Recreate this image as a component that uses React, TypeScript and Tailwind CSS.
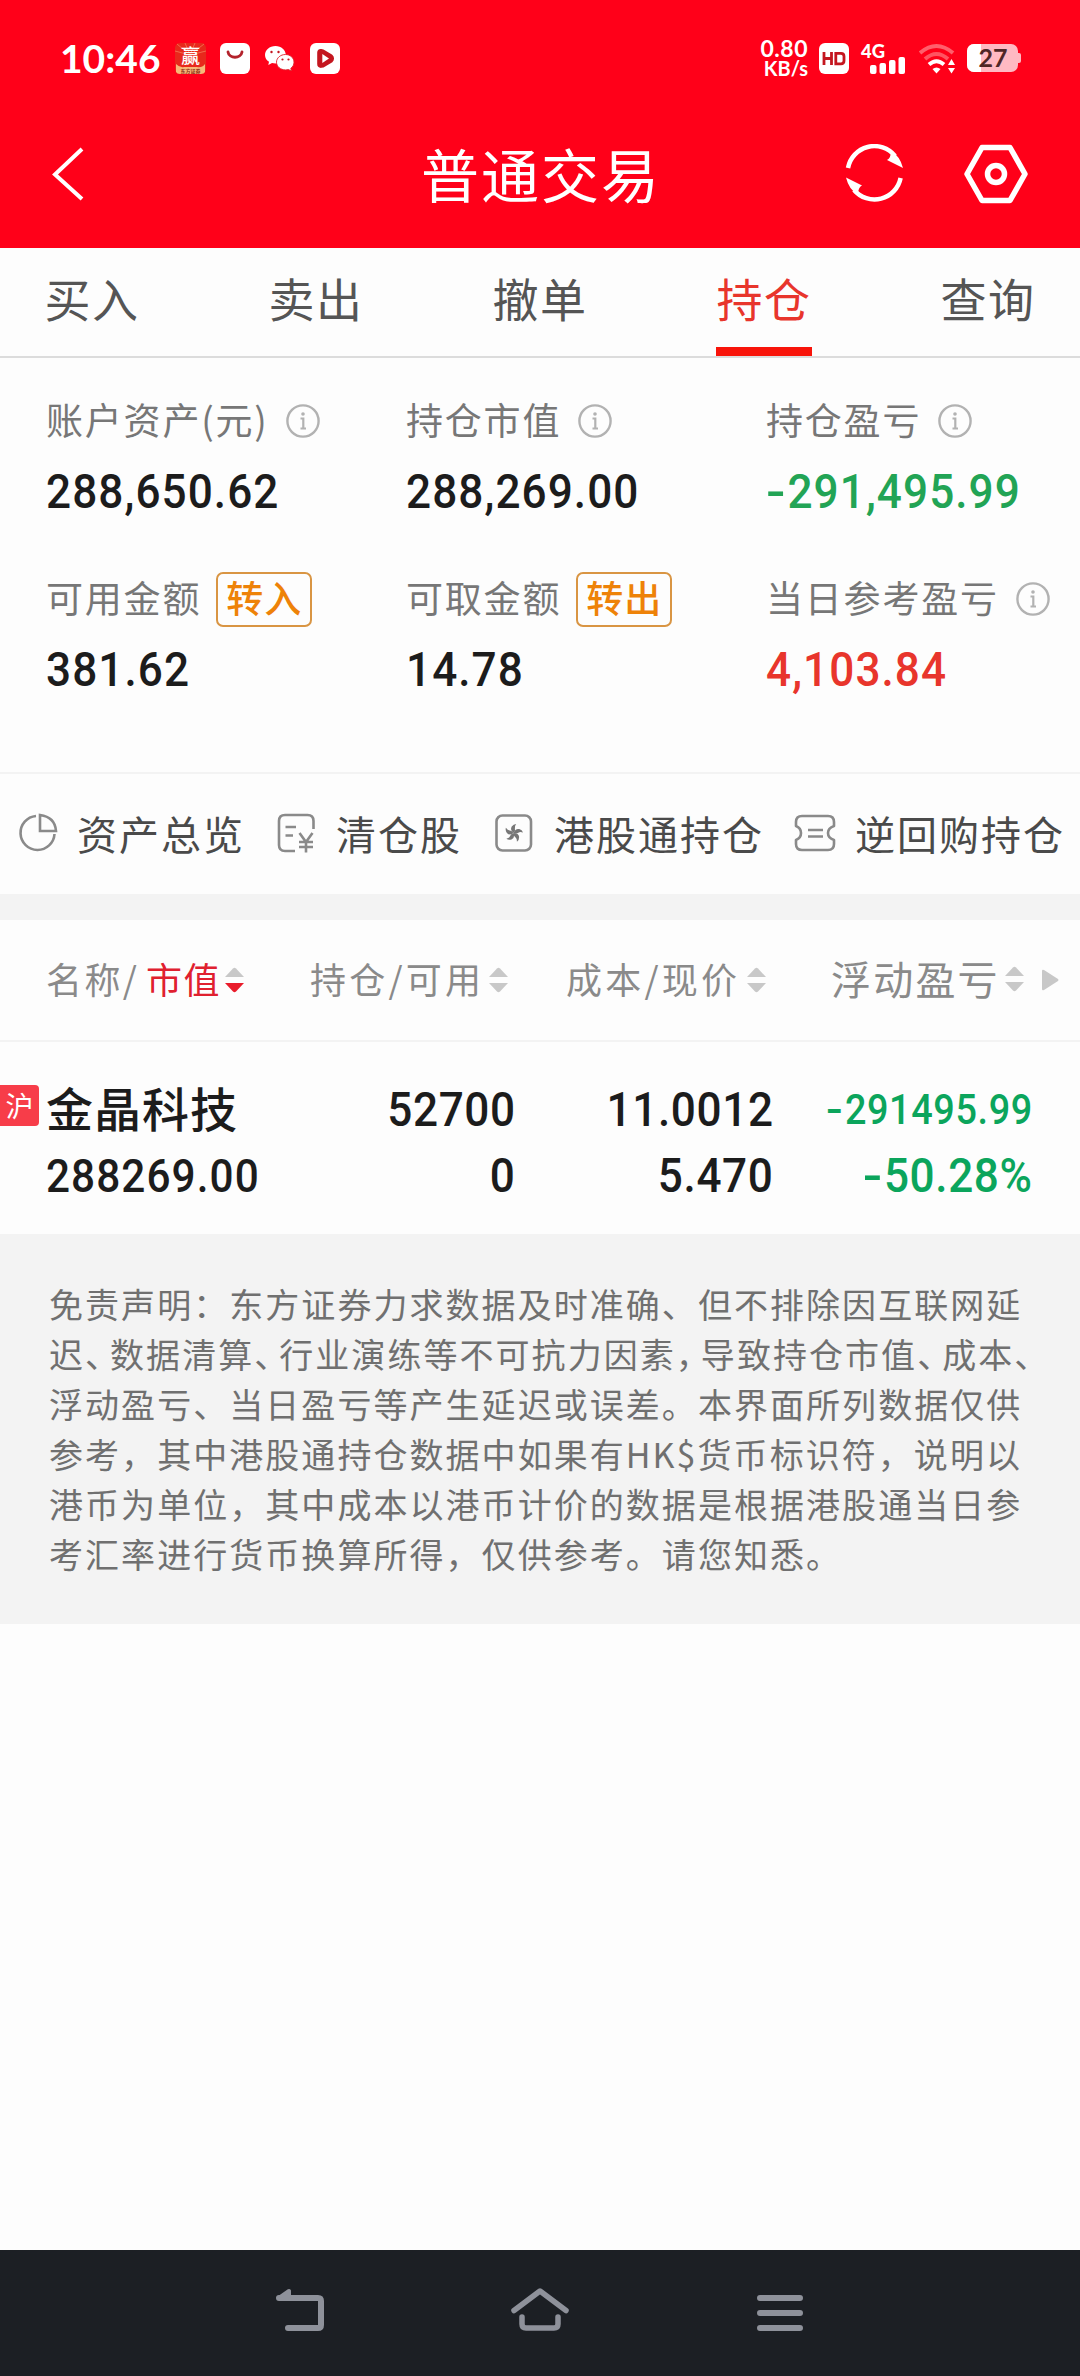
import type { ReactNode } from 'react';

const CJK = "font-['Noto_Sans_CJK_SC',sans-serif]";

const tabs = ['买入', '卖出', '撤单', '持仓', '查询'];

function StatusBar() {
  return (
    <div className="flex h-[116px] items-center pl-[60px] pr-[59px] text-white">
      <span className="w-[115px] font-['Lato'] text-[39px] leading-[50px] font-bold">10:46</span>
      <svg className="h-[31px] w-[31px] overflow-visible" viewBox="0 0 31 31">
        <rect width="31" height="31" rx="5" fill="#e8281c" />
        <path d="M15 12 2 1M15 12 10 0M15 12 20 0M15 12 29 1M15 12 0 8M15 12 31 8" stroke="#f26a4c" />
        <path d="M1 21q4 4 8 3h13q5 1 8-3v8q-1 2-4 2H5q-3 0-4-2z" fill="#f7b878" />
        <text x="15.500" y="20" textAnchor="middle" fontSize="19" fontWeight="500" fill="#fff" fontFamily="Noto Sans CJK SC">赢</text>
        <text x="15.500" y="29.500" textAnchor="middle" fontSize="5" fontWeight="700" fill="#8b2a12" fontFamily="Noto Sans CJK SC">东方证券</text>
      </svg>
      <svg className="ml-[14px] h-[31px] w-[30px]" viewBox="0 0 30 31">
        <rect width="30" height="31" rx="6" fill="#fff" />
        <path d="M8 9c1 7 13 7 14 0" fill="none" stroke="#b3222b" strokeWidth="2.800" strokeLinecap="round" />
      </svg>
      <svg className="ml-[15px] h-[26px] w-[30px]" viewBox="0 0 30 26">
        <path d="M10.500 1C4.500 1 0 5 0 10c0 3 1.500 5.200 4 6.800L3.300 20l3.700-2c1.200.3 2.400.5 3.500.5 5.500 0 10.300-3.500 10.300-8.500S16.300 1 10.500 1z" fill="#fff" />
        <path d="M20.500 9.500c-5 0-9 3.400-9 7.700s4 7.700 9 7.700c1 0 2-.1 2.900-.4l3 1.500-.6-2.700c2-1.400 3.200-3.600 3.200-6.100 0-4.300-3.800-7.700-8.500-7.700z" fill="#fff" stroke="#e0202a" strokeWidth="0.900" />
        <g fill="#c4161f">
          <circle cx="6.500" cy="7" r="1.200" />
          <circle cx="13.500" cy="7" r="1.200" />
          <circle cx="17.500" cy="14.500" r="1.100" />
          <circle cx="23.500" cy="14.500" r="1.100" />
        </g>
      </svg>
      <svg className="ml-[15px] h-[31px] w-[30px]" viewBox="0 0 30 31">
        <rect width="30" height="31" rx="6" fill="#fff" />
        <path d="M9 9.500q0-2 2-1.700l2 .5 8 4.700q2.500 2.500 0 5l-8 4.700-2 .4q-2 0-2-2z" fill="#c4161f" stroke="#c4161f" strokeWidth="3.600" strokeLinejoin="round" />
        <path d="M12.300 11v9l6.700-4.500z" fill="#fff" />
      </svg>

      <div className="ml-auto flex w-[52px] flex-col items-end font-['Lato'] font-bold">
        <span className="text-[23px] leading-[19px] tracking-[0.500px]">0.80</span>
        <span className="text-[20px] leading-[20px]">KB/s</span>
      </div>
      <svg className="ml-[11px] h-[31px] w-[30px]" viewBox="0 0 30 31">
        <rect width="30" height="31" rx="6" fill="#fff" />
        <path d="M5 9v13M12.500 9v13M5 15.500h7.500M16.800 10.300H22q3 0 3 3v4.500q0 3-3 3h-5.200z" fill="none" stroke="#c4161f" strokeWidth="2.800" />
      </svg>
      <svg className="ml-[12px] h-[31px] w-[45px] overflow-visible" viewBox="0 0 45 31">
        <text x="0" y="14.500" fontSize="19.500" fontWeight="900" fill="#fff" fontFamily="Lato" textLength="24" lengthAdjust="spacingAndGlyphs">4G</text>
        <g fill="#fff">
          <rect x="9" y="22" width="6.500" height="9" rx="2" />
          <rect x="18.500" y="20" width="6.500" height="11" rx="2" />
          <rect x="28" y="17" width="6.500" height="14" rx="2" />
          <rect x="37.500" y="14" width="6.500" height="17" rx="2" />
        </g>
      </svg>
      <svg className="ml-[13px] h-[31px] w-[37px]" viewBox="0 0 37 31">
        <g fill="none" strokeWidth="4">
          <path d="M1 10q16.500-14 33 0" stroke="#ff5f6c" />
          <path d="M6 16q11.500-10 23 0" stroke="#ff5361" />
          <path d="M10 21.500q7.500-6.500 15 0" stroke="#fff" />
        </g>
        <path d="M17.500 30.500 13.500 26q4-3 8 0z" fill="#fff" />
        <path d="M32.500 16l3.500 6h-7zM32.500 30.500l3.500-5.500h-7z" fill="#fff" />
      </svg>
      <svg className="ml-[11px] h-[28px] w-[54px] overflow-visible" viewBox="0 0 54 28">
        <clipPath id="battery">
          <rect width="51" height="28" rx="7" />
        </clipPath>
        <g clipPath="url(#battery)">
          <rect width="51" height="28" fill="#ffb9c2" />
          <rect width="14" height="28" fill="#fff" />
        </g>
        <path d="M51 9h1q2 0 2 2v6q0 2-2 2h-1z" fill="#ffb9c2" />
        <text x="26" y="23" textAnchor="middle" fontSize="25" fontWeight="700" fill="#4f2626" fontFamily="Lato">27</text>
      </svg>
    </div>
  );
}

function TitleBar() {
  return (
    <div className="flex h-[132px] items-center pr-[51px] pb-[16px] pl-[52px] text-white">
      <svg className="h-[54px] w-[32px]" viewBox="0 0 32 54" fill="none" stroke="#fff" strokeWidth="4">
        <path d="M30 2 3 27.500 30 52" />
      </svg>
      <h1 className={`${CJK} ml-[337px] w-[240px] pb-[2px] text-[58px] leading-none tracking-[2px] whitespace-nowrap`}>普通交易</h1>
      <svg className="ml-[184px] h-[60px] w-[60px]" viewBox="0 0 60 60">
        <g fill="none" stroke="#fff" strokeWidth="4.500">
          <path d="M3 24A26.700 26.700 0 0 1 50 12" />
          <path d="M55.600 34A26.700 26.700 0 0 1 9 46" />
        </g>
        <path d="M46 7q9 5 12 17l-16-8q4-2 4-9zM13 50.500Q4 46 1 33.500l16 8q-4 2-4 9z" fill="#fff" />
      </svg>
      <svg className="ml-[59px] h-[62px] w-[64px]" viewBox="0 0 64 62" fill="none" stroke="#fff" strokeWidth="5.500" strokeLinejoin="round">
        <path d="M18 4.500h28L61 31 46 57.500H18L3 31z" />
        <circle cx="32" cy="31" r="8.500" />
      </svg>
    </div>
  );
}

function Tabs() {
  return (
    <nav className={`${CJK} flex h-[110px] justify-between border-b-2 border-[#dcdcdc] px-[44px] text-[46px]`}>
      {tabs.map((tab) => (
        <div
          key={tab}
          className={
            tab === '持仓'
              ? 'w-[96px] border-b-[9px] border-[#f8140a] pt-[16px] text-center leading-[66px] tracking-[1.500px] whitespace-nowrap text-[#e8352c]'
              : 'w-[96px] pt-[16px] text-center leading-[66px] tracking-[1.500px] whitespace-nowrap text-[#555]'
          }
        >
          {tab}
        </div>
      ))}
    </nav>
  );
}

// Narrow figures; the leading minus gets a little more room than the digits
function Num({ value, right = false }: { value: string; right?: boolean }) {
  const negative = value.startsWith('-');
  return (
    <span
      className={
        right
          ? "inline-block origin-right scale-x-90 align-top font-['Roboto'] font-medium tracking-[0.700px] whitespace-nowrap"
          : "inline-block origin-left scale-x-90 align-top font-['Roboto'] font-medium tracking-[1.200px] whitespace-nowrap"
      }
    >
      {negative && <span className="mr-[6px] inline-block origin-left scale-x-130">-</span>}
      {negative ? value.slice(1) : value}
    </span>
  );
}

function Info() {
  return (
    <svg className="ml-[17px] h-[34px] w-[34px] shrink-0" viewBox="0 0 34 34">
      <circle cx="17" cy="17" r="15.600" fill="none" stroke="#b2b2b2" strokeWidth="2.400" />
      <circle cx="17" cy="10" r="1.800" fill="#b2b2b2" />
      <path d="M14.500 14.500H17.300V24M14.500 24.500h5.500" fill="none" stroke="#b2b2b2" strokeWidth="2.200" />
    </svg>
  );
}

function Stat({ label, value, color = 'text-[#1c1c1c]', children }: { label: string; value: string; color?: string; children?: ReactNode }) {
  return (
    <div className="h-[178px] w-[360px] shrink-0">
      <div className={`${CJK} flex h-[56px] items-center text-[37px] leading-none tracking-[1.800px] whitespace-nowrap text-[#777]`}>
        <span className="pb-[3px]">{label}</span>
        {children}
      </div>
      <div className={`${color} mt-[13px] text-[49px] leading-[60px]`}>
        <Num value={value} />
      </div>
    </div>
  );
}

function Transfer({ text }: { text: string }) {
  return (
    <span className="ml-[15px] flex h-[55px] w-[96px] items-center justify-center rounded-[7px] border-2 border-[#d99543] pb-[3px] text-[37px] font-medium tracking-[1px] text-[#ee8208]">
      {text}
    </span>
  );
}

function Account() {
  return (
    <section className="h-[416px] overflow-hidden border-b-2 border-[#f3f3f3] pt-[35px] pl-[46px]">
      <div className="flex">
        <Stat label="账户资产(元)" value="288,650.62">
          <Info />
        </Stat>
        <Stat label="持仓市值" value="288,269.00">
          <Info />
        </Stat>
        <Stat label="持仓盈亏" value="-291,495.99" color="text-[#22a455]">
          <Info />
        </Stat>
      </div>
      <div className="flex">
        <Stat label="可用金额" value="381.62">
          <Transfer text="转入" />
        </Stat>
        <Stat label="可取金额" value="14.78">
          <Transfer text="转出" />
        </Stat>
        <Stat label="当日参考盈亏" value="4,103.84" color="text-[#e8352c]">
          <Info />
        </Stat>
      </div>
    </section>
  );
}

function Shortcuts() {
  return (
    <section className={`${CJK} flex h-[120px] items-center pb-[2px] text-[40px] leading-none tracking-[2px] whitespace-nowrap text-[#4a4a4a]`}>
      <svg className="ml-[18px] h-[40px] w-[40px]" viewBox="0 0 40 40" fill="none" stroke="#8a8a8a" strokeWidth="2.600">
        <path d="M18 3A17 17 0 1 0 36.500 21" />
        <path d="M22 2v16h16Q37 4 22 2z" />
      </svg>
      <span className="ml-[19px] w-[200px]">资产总览</span>
      <svg className="h-[40px] w-[38px]" viewBox="0 0 38 40" fill="none" stroke="#8a8a8a" strokeWidth="2.600">
        <path d="M36.500 16V8q0-6-6-6H8Q2 2 2 8v24q0 6 6 6h10" />
        <path d="M8.500 14h10.500M8.500 22.500h7.500M22.500 20l6.500 9 6.500-9M29 29v10.500M22 29h14M22 34h14" />
      </svg>
      <span className="ml-[21px] w-[159px]">清仓股</span>
      <svg className="h-[38px] w-[38px]" viewBox="0 0 38 38" fill="none" stroke="#8a8a8a" strokeWidth="2.600">
        <rect x="1.500" y="1.500" width="34.500" height="35" rx="6" />
        <g fill="#777" stroke="none">
          {[0, 72, 144, 216, 288].map((a) => (
            <path key={a} transform={`rotate(${a} 18.700 19)`} d="M18.700 19q-4-3-2-6.500 1.700-2.500 4.500-2.500-2 2.500-1.300 4.500.7 2-1.200 4.500z" />
          ))}
        </g>
      </svg>
      <span className="ml-[21px] w-[240px]">港股通持仓</span>
      <svg className="h-[38px] w-[42px]" viewBox="0 0 42 38" fill="none" stroke="#8a8a8a" strokeWidth="2.600">
        <path d="M8 2h26q6 0 6 6v4q-6 2-6 7t6 7v4q0 6-6 6H8q-6 0-6-6v-4q5-2 5-7t-5-7V8q0-6 6-6z" strokeLinejoin="round" />
        <path d="M14 16h15M14 22.500h15" />
      </svg>
      <span className="ml-[19px]">逆回购持仓</span>
    </section>
  );
}

function Sort({ active = false }: { active?: boolean }) {
  return (
    <svg className="h-[26px] w-[19px] shrink-0" viewBox="0 0 19 26">
      <path d="M0 10 8 1.500q1.500-1.500 3 0L19 10z" fill="#c8c8c8" />
      <path d="M0 16l8 8.500q1.500 1.500 3 0L19 16z" fill={active ? '#e91c2b' : '#c8c8c8'} />
    </svg>
  );
}

function TableHead() {
  return (
    <div className={`${CJK} flex h-[122px] items-center border-b-2 border-[#f3f3f3] text-[36px] leading-none tracking-[1.500px] whitespace-nowrap text-[#8a8a8a]`}>
      <div className="ml-[46px] flex w-[264px] items-center">
        <span className="w-[100px] pb-[4px] tracking-[2.400px]">名称/</span>
        <span className="w-[79px] pb-[4px] text-[#e0202f]">市值</span>
        <Sort active />
      </div>
      <div className="flex w-[256px] items-center">
        <span className="w-[179px] pb-[4px] tracking-[3.200px]">持仓/可用</span>
        <Sort />
      </div>
      <div className="flex w-[265px] items-center">
        <span className="w-[181px] pb-[4px] tracking-[3.200px]">成本/现价</span>
        <Sort />
      </div>
      <span className="w-[174px] pb-[4px] text-[40px] tracking-[2.200px]">浮动盈亏</span>
      <span className="pb-[3px]">
        <Sort />
      </span>
      <svg className="ml-[18px] h-[22px] w-[17px]" viewBox="0 0 17 22">
        <path d="M0 2q0-2 2-1l14 9q1 1 0 2L2 21q-2 1-2-1z" fill="#c8c8c8" />
      </svg>
    </div>
  );
}

function Holding() {
  return (
    <div className="flex h-[192px] pt-[35px] text-[49px] text-[#1c1c1c]">
      <div className={`${CJK} mt-[8px] flex h-[41px] w-[39px] items-center justify-center rounded-r-[4px] bg-[#f73d49] pb-[2px] text-[28px] leading-none text-white`}>沪</div>
      <div className="ml-[7px] w-[221px]">
        <div className={`${CJK} h-[66px] text-[47px] leading-[60px] font-medium tracking-[1px] whitespace-nowrap`}>金晶科技</div>
        <div className="text-[47px] leading-[66px]"><Num value="288269.00" /></div>
      </div>
      <div className="w-[249px] text-right leading-[66px]">
        <div><Num value="52700" right /></div>
        <div><Num value="0" right /></div>
      </div>
      <div className="w-[258px] text-right leading-[66px]">
        <div><Num value="11.0012" right /></div>
        <div><Num value="5.470" right /></div>
      </div>
      <div className="w-[259px] text-right leading-[66px] text-[#0ba55c]">
        <div className="text-[42px]"><Num value="-291495.99" right /></div>
        <div><Num value="-50.28%" right /></div>
      </div>
    </div>
  );
}

// punctuation on the crowded line is set tighter than the rest
function P({ children }: { children: string }) {
  return <span className="tracking-[-9px]">{children}</span>;
}

function Disclaimer() {
  return (
    <section className={`${CJK} h-[390px] bg-[#f3f3f3] pt-[45px] pl-[49px] text-[34px] leading-[50px] tracking-[2.050px] whitespace-nowrap text-[#707070]`}>
      <p>免责声明：东方证券力求数据及时准确、但不排除因互联网延</p>
      <p>迟<P>、</P>数据清算<P>、</P>行业演练等不可抗力因素<P>，</P>导致持仓市值<P>、</P>成本<P>、</P></p>
      <p>浮动盈亏、当日盈亏等产生延迟或误差。本界面所列数据仅供</p>
      <p>参考，其中港股通持仓数据中如果有HK$货币标识符，说明以</p>
      <p>港币为单位，其中成本以港币计价的数据是根据港股通当日参</p>
      <p>考汇率进行货币换算所得，仅供参考。请您知悉。</p>
    </section>
  );
}

function SystemNav() {
  return (
    <footer className="flex h-[126px] items-start bg-[#1c1f24] pt-[36px]">
      <svg className="ml-[275px] h-[48px] w-[50px]" viewBox="0 0 50 48" fill="none" stroke="#8e919a" strokeWidth="6" strokeLinecap="round" strokeLinejoin="round">
        <path d="M4 12h39q3 0 3 3v24q0 3-3 3H13" />
        <path d="M4 12l10-7v5z" strokeWidth="4" fill="#8e919a" />
      </svg>
      <svg className="ml-[185px] h-[48px] w-[60px]" viewBox="0 0 60 48" fill="none" stroke="#8e919a" strokeWidth="5.500" strokeLinecap="round" strokeLinejoin="round">
        <path d="M4 24.500 30 5l26 19.500" />
        <path d="M12 31v7q0 4 4 4h28q4 0 4-4v-7" />
      </svg>
      <svg className="ml-[187px] h-[48px] w-[46px]" viewBox="0 0 46 48" fill="none" stroke="#8e919a" strokeWidth="6" strokeLinecap="round">
        <path d="M3 12h40M3 27h40M3 42h40" />
      </svg>
    </footer>
  );
}

export default function App() {
  return (
    <div className="flex h-[2376px] w-[1080px] flex-col overflow-hidden bg-[#fdfdfd]">
      <header className="h-[248px] bg-[#ff0019]">
        <StatusBar />
        <TitleBar />
      </header>
      <Tabs />
      <main className="grow">
        <Account />
        <Shortcuts />
        <div className="h-[26px] bg-[#f3f3f3]" />
        <TableHead />
        <Holding />
        <Disclaimer />
      </main>
      <SystemNav />
    </div>
  );
}
